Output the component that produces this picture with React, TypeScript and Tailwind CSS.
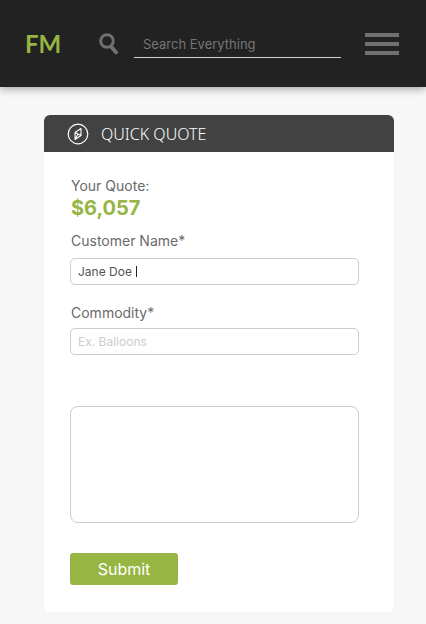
import React from "react";

function SearchIcon() {
  return (
    <svg viewBox="0 0 20 22" className="h-[22px] w-5 shrink-0" fill="none" stroke="#707070" aria-hidden="true">
      <circle cx="8" cy="8" r="6.3" strokeWidth="3" />
      <path d="M12 13.5 17 19.3" strokeWidth="4" strokeLinecap="round" />
    </svg>
  );
}

function CompassIcon() {
  return (
    <svg viewBox="0 0 22 22" className="size-[22px] shrink-0" fill="none" stroke="#fff" strokeLinejoin="round" aria-hidden="true">
      <circle cx="11" cy="11" r="9.8" strokeWidth="1.2" />
      <path d="M14 5.5 8 9.5V16.5L14 12.5ZM8 9.5 14 12.5M11 11 8 16.5" strokeWidth="1.1" />
    </svg>
  );
}

function Header() {
  return (
    <header className="flex h-[87px] items-center bg-[#222222] pt-px pr-[27px] pl-[25px] shadow-[0_2px_8px_rgba(0,0,0,0.35)]">
      <a href="#" className="w-[74px] shrink-0 font-[Lato,sans-serif] text-[24px] leading-8 font-bold text-[#97b543]">
        FM
      </a>
      <label htmlFor="search" className="shrink-0" aria-label="Search">
        <SearchIcon />
      </label>
      <input
        id="search"
        type="search"
        placeholder="Search Everything"
        className="ml-[15px] h-[27px] min-w-0 flex-1 border-b border-[#d0d0d0] bg-transparent pl-[9px] text-[13px] text-white outline-none placeholder:text-[#757575]"
      />
      <button type="button" aria-label="Menu" className="ml-6 flex w-[34px] shrink-0 flex-col gap-[5px]">
        <span className="h-1 bg-[#707070]" />
        <span className="h-1 bg-[#707070]" />
        <span className="h-1 bg-[#707070]" />
      </button>
    </header>
  );
}

const label = "block pl-px text-[14px] leading-5 text-[#6a6a6a]";

function QuoteCard() {
  return (
    <section className="overflow-hidden rounded-md bg-white">
      <h1 className="flex h-[37px] items-center gap-3 bg-[#424242] pl-[23px] font-['Noto_Sans',sans-serif] text-[16px] font-light text-white">
        <CompassIcon />
        QUICK QUOTE
      </h1>
      <form className="pt-6 pr-[35px] pb-[27px] pl-[26px]" onSubmit={(e) => e.preventDefault()}>
        <p className={label}>Your Quote:</p>
        <p className="pl-px text-[20px] leading-6 font-bold text-[#97b543]">$6,057</p>
        <label htmlFor="customer" className={`${label} mt-[11px]`}>
          Customer Name*
        </label>
        <div className="mt-[7px] flex h-[27px] items-center rounded-[5px] border border-[#cccccc] px-[7px]">
          <input
            id="customer"
            type="text"
            defaultValue="Jane Doe"
            className="max-w-full field-sizing-content text-[12px] text-[#555555] outline-none"
          />
          <span className="ml-1 h-[11px] w-px bg-[#222222]" />
        </div>
        <label htmlFor="commodity" className={`${label} mt-[18px]`}>
          Commodity*
        </label>
        <input
          id="commodity"
          type="text"
          placeholder="Ex. Balloons"
          className="mt-[5px] block h-[27px] w-full rounded-[5px] border border-[#cccccc] px-[7px] text-[12px] text-[#555555] outline-none placeholder:text-[#cccccc]"
        />
        <textarea
          aria-label="Details"
          className="mt-[51px] block h-[117px] w-full resize-none rounded-lg border border-[#cccccc] p-2 text-[12px] outline-none"
        />
        <button type="submit" className="mt-[30px] h-8 w-[108px] rounded-[3px] bg-[#97b543] text-[16px] text-white">
          Submit
        </button>
      </form>
    </section>
  );
}

export default function App() {
  return (
    <div className="min-h-screen bg-[#f7f7f7] font-[Inter,sans-serif]">
      <Header />
      <main className="pt-7 pr-8 pb-3 pl-11">
        <QuoteCard />
      </main>
    </div>
  );
}
